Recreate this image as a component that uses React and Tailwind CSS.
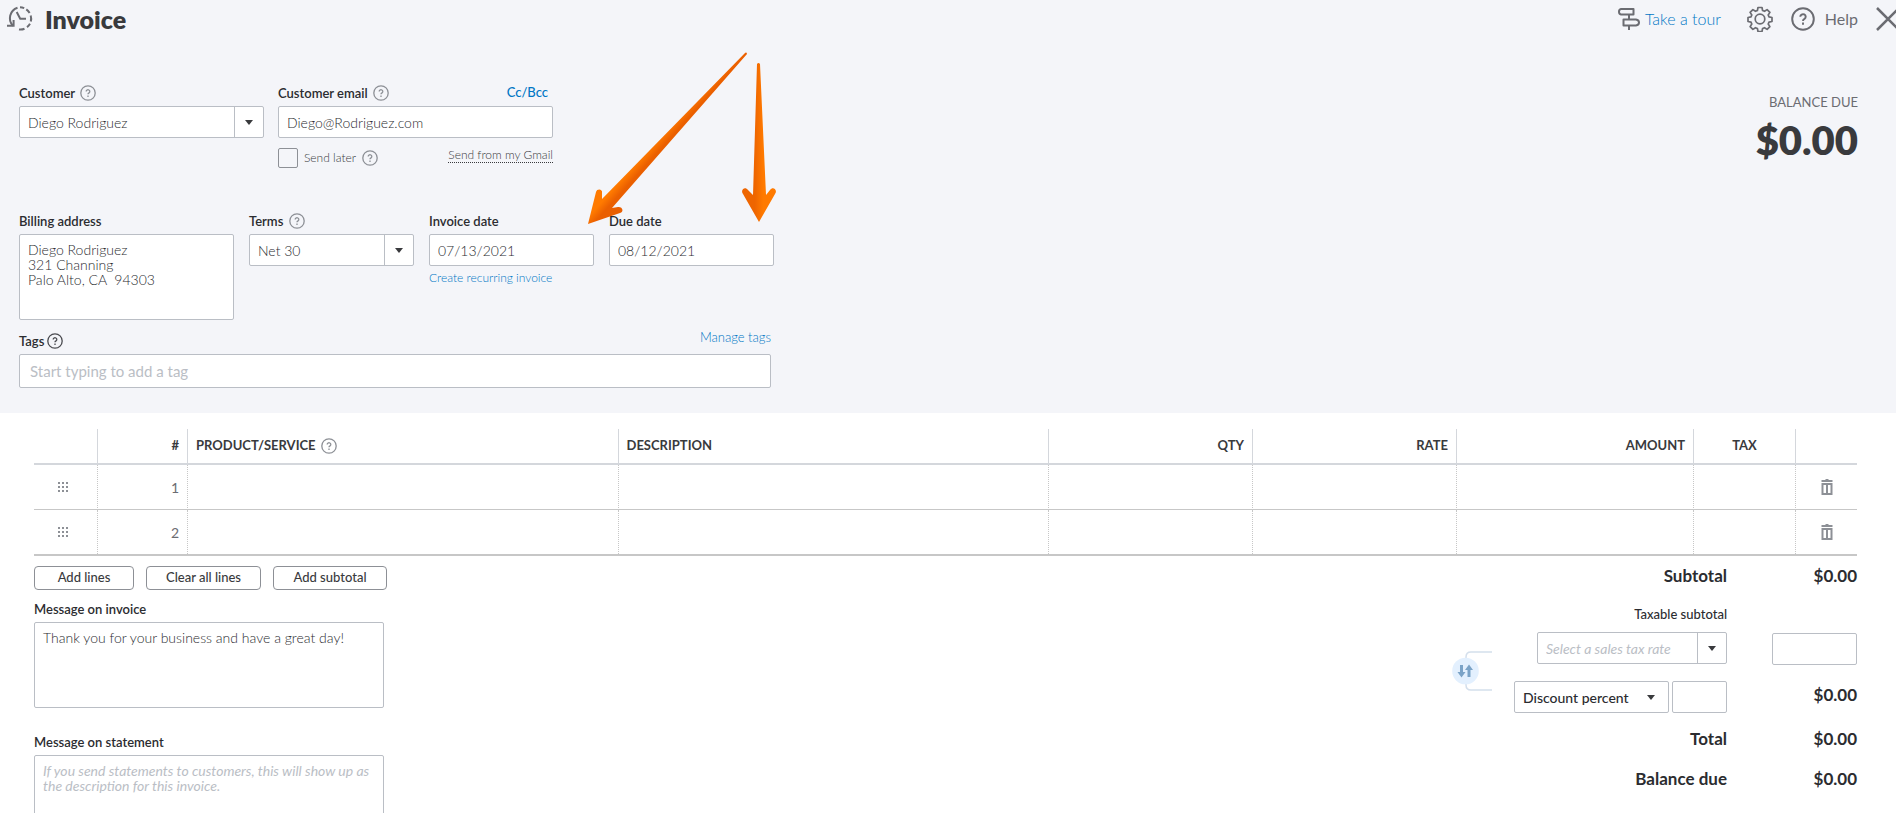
import { useState } from 'react'

const labelCls = 'text-[13px] leading-4 font-semibold text-[#2b2c30]'
const boxCls = 'rounded-xs border border-[#babec5] bg-white text-[14px] text-[#2b2c30] outline-none focus:border-[#2ca01c]'
const totalCls = 'text-[17px] leading-5 font-bold text-[#2b2c30]'

function HelpIcon({ size = 16, color = '#8d9096', width = 1.3 }) {
  return (
    <svg width={size} height={size} viewBox="0 0 16 16" fill="none" stroke={color} strokeWidth={width} aria-hidden="true">
      <circle cx="8" cy="8" r="7.2" />
      <path d="M6.200 6.500a1.800 1.700 0 1 1 2.800 1.400c-.7.4-1 .7-1 1.400" />
      <path d="M8 10.400v1.500" />
    </svg>
  )
}

function Caret() {
  return (
    <svg width="8" height="5" viewBox="0 0 8 5" fill="#393a3d" aria-hidden="true">
      <path d="M0 0h8L4 5z" />
    </svg>
  )
}

function Dropdown({ id, options, className, selectClass = 'font-light', divider = true, ...props }) {
  return (
    <div className={`grid h-8 ${className}`}>
      <select id={id} className={`col-start-1 row-start-1 w-full appearance-none pl-2 pr-8 ${boxCls} ${selectClass}`} {...props}>
        {options.map((item) => (
          <option key={item}>{item}</option>
        ))}
      </select>
      <span className={`pointer-events-none col-start-1 row-start-1 flex items-center justify-center justify-self-end pr-[2px] ${divider ? 'w-[30px] border-l border-[#babec5]' : 'w-[34px]'}`}>
        <Caret />
      </span>
    </div>
  )
}

function HistoryIcon() {
  return (
    <svg width="26" height="26" viewBox="0 0 26 26" fill="none" stroke="#6b6c72" strokeWidth="2" aria-hidden="true">
      <path d="M6 19.800A11 11 0 0 1 10.500 1.700" />
      <path d="M13 1.300a11 11 0 0 1 4.200.9M19.300 3.400a11 11 0 0 1 3.300 3.600M23.700 9.500a11 11 0 0 1 .1 6M23 17.800a11 11 0 0 1-3 3.300M17.500 22.700a11 11 0 0 1-5.500.7" />
      <path d="M0 19.700h6.600V14" />
      <path d="M9.700 6l3.500 6.700h5.800" />
    </svg>
  )
}

function SignpostIcon() {
  return (
    <svg width="24" height="24" viewBox="0 0 24 24" fill="none" stroke="#6b6c72" strokeWidth="2" strokeLinejoin="round" aria-hidden="true">
      <path d="M4 2h12.500v5.500H4Q2 7 2 4.700T4 2z" />
      <path d="M6.500 12.500H19q3 .5 3 3t-3 3H6.500z" />
      <path d="M12 7.500v5M12 18.500v4.500" />
    </svg>
  )
}

function GearIcon() {
  return (
    <svg width="26" height="26" viewBox="0 0 26 26" fill="none" stroke="#6b6c72" strokeWidth="1.700" strokeLinejoin="round" aria-hidden="true">
      <path d="M11 1.500h4l.6 3 1.900.8 2.600-1.700 2.800 2.800-1.700 2.600.8 1.900 3 .6v4l-3 .6-.8 1.900 1.700 2.600-2.800 2.800-2.600-1.700-1.900.8-.6 3h-4l-.6-3-1.900-.8-2.600 1.700-2.800-2.800 1.700-2.600-.8-1.900-3-.6v-4l3-.6.8-1.900-1.700-2.600 2.800-2.800 2.600 1.700 1.900-.8z" />
      <circle cx="13" cy="13" r="4.800" />
    </svg>
  )
}

function TrashIcon() {
  return (
    <svg width="12" height="16" viewBox="0 0 12 16" fill="none" stroke="#8d9096" strokeWidth="2" aria-hidden="true">
      <path d="M.5 2h11" />
      <path d="M4.500.5h3" strokeWidth="1" />
      <path d="M1.500 5h9v10h-9zM6 5v10" />
    </svg>
  )
}

function DragIcon() {
  return (
    <svg width="10" height="10" viewBox="0 0 10 10" fill="#8d9096" aria-hidden="true">
      {[0, 4, 8].map((y) => [0, 4, 8].map((x) => <rect key={`${x}-${y}`} x={x} y={y} width="2" height="2" />))}
    </svg>
  )
}

function Arrows() {
  return (
    <svg className="pointer-events-none absolute left-[580px] top-[45px]" width="200" height="185" viewBox="580 45 200 185" aria-hidden="true">
      <defs>
        <linearGradient id="slanted" gradientUnits="userSpaceOnUse" x1="601" y1="199" x2="611" y2="208">
          <stop offset="0.2" stopColor="#ff7a00" />
          <stop offset="0.8" stopColor="#ea5f00" />
        </linearGradient>
        <linearGradient id="upright" gradientUnits="userSpaceOnUse" x1="752" y1="0" x2="766" y2="0">
          <stop offset="0.2" stopColor="#ee6500" />
          <stop offset="0.8" stopColor="#ff7a00" />
        </linearGradient>
      </defs>
      <path fill="url(#slanted)" d="M744.500 53.500q2-2 2.500.5L612 208l6-1c5-.5 6 5 2 6l-32 11 8-32c1-4 7-3 6 1v6z" />
      <path fill="url(#upright)" d="M757 64q1.500-2 3 0l6 131 4-5c3-4 8 0 5 4l-16 28-16-28c-3-4 2-8 5-4l5 5z" />
    </svg>
  )
}

function SwapIcon() {
  return (
    <svg width="40" height="42" viewBox="0 0 40 42" fill="none" aria-hidden="true">
      <path d="M40 2H19q-5 0-5 5v28q0 5 5 5h21" stroke="#d4dfec" strokeWidth="1.500" />
      <circle cx="13.500" cy="21" r="13.300" fill="#e3f0fe" />
      <path d="M9.500 15v8M17 19v8" stroke="#7ba3c7" strokeWidth="3" />
      <path d="M5.500 22h8l-4 5.500zM13 20h8l-4-5.500z" fill="#7ba3c7" />
    </svg>
  )
}

function Header() {
  return (
    <header className="flex h-8 items-center justify-between pl-[7px] pt-[6px]">
      <div className="flex items-center gap-3">
        <HistoryIcon />
        <h1 className="text-[25px] leading-8 font-extrabold text-[#393a3d]">Invoice</h1>
      </div>
      <div className="flex items-center text-[16px] text-[#6b6c72]">
        <a href="#tour" className="flex items-center gap-1 font-light text-[#0077c5]">
          <SignpostIcon />
          Take a tour
        </a>
        <button aria-label="Settings" className="ml-[26px]"><GearIcon /></button>
        <button className="ml-[18px] flex items-center gap-[10px]">
          <HelpIcon size={24} color="#6b6c72" />
          Help
        </button>
        <button aria-label="Close" className="-mr-1 ml-[18px]">
          <svg width="24" height="24" viewBox="0 0 24 24" stroke="#6b6c72" strokeWidth="2.500" aria-hidden="true">
            <path d="M1 1l22 22M23 1L1 23" />
          </svg>
        </button>
      </div>
    </header>
  )
}

function CustomerRow() {
  return (
    <div className="flex items-start gap-[14px]">
      <div className="w-[245px]">
        <div className="mb-[5px] flex h-4 items-center gap-[5px]">
          <label htmlFor="customer" className={labelCls}>Customer</label>
          <HelpIcon />
        </div>
        <Dropdown id="customer" options={['Diego Rodriguez']} className="w-full" />
      </div>
      <div className="w-[275px]">
        <div className="mb-[5px] flex h-4 items-center gap-[5px]">
          <label htmlFor="email" className={labelCls}>Customer email</label>
          <HelpIcon />
          <a href="#cc" className="ml-auto mr-[5px] text-[13px] font-medium text-[#0077c5]">Cc/Bcc</a>
        </div>
        <input id="email" type="email" defaultValue="Diego@Rodriguez.com" className={`h-8 w-full px-2 font-light ${boxCls}`} />
        <div className="mt-[10px] flex items-start justify-between text-[12px] leading-[14px] text-[#393a3d]">
          <div className="flex items-center gap-[6px]">
            <input id="later" type="checkbox" className="size-5 appearance-none rounded-xs border border-[#8d9096] checked:bg-[#2ca01c]" />
            <label htmlFor="later" className="font-light">Send later</label>
            <HelpIcon />
          </div>
          <a href="#gmail" className="border-b border-dotted border-[#393a3d] font-light">Send from my Gmail</a>
        </div>
      </div>
    </div>
  )
}

function DetailsRow() {
  return (
    <div className="flex items-start gap-[15px]">
      <div className="flex w-[215px] flex-col gap-[5px]">
        <label htmlFor="address" className={labelCls}>Billing address</label>
        <textarea id="address" defaultValue={'Diego Rodriguez\n321 Channing\nPalo Alto, CA  94303'} className={`h-[86px] resize-none px-2 py-[7px] leading-[15px] font-light ${boxCls}`} />
      </div>
      <div className="w-[165px]">
        <div className="mb-[5px] flex h-4 items-center gap-[6px]">
          <label htmlFor="terms" className={labelCls}>Terms</label>
          <HelpIcon />
        </div>
        <Dropdown id="terms" options={['Net 30']} className="w-full" />
      </div>
      <div className="flex w-[165px] flex-col gap-[5px]">
        <label htmlFor="invoice-date" className={labelCls}>Invoice date</label>
        <input id="invoice-date" defaultValue="07/13/2021" className={`h-8 px-2 font-light ${boxCls}`} />
        <a href="#recurring" className="text-[12px] leading-[14px] font-light text-[#0077c5]">Create recurring invoice</a>
      </div>
      <div className="flex w-[165px] flex-col gap-[5px]">
        <label htmlFor="due-date" className={labelCls}>Due date</label>
        <input id="due-date" defaultValue="08/12/2021" className={`h-8 px-2 font-light ${boxCls}`} />
      </div>
    </div>
  )
}

function TagsRow() {
  return (
    <div className="w-[752px]">
      <div className="mb-[5px] flex items-start justify-between">
        <div className="flex items-center gap-[3px] pt-1">
          <label htmlFor="tags" className={labelCls}>Tags</label>
          <HelpIcon color="#4a4b50" />
        </div>
        <a href="#tags" className="text-[13px] leading-4 font-light text-[#0077c5]">Manage tags</a>
      </div>
      <input id="tags" placeholder="Start typing to add a tag" className="h-[34px] w-full rounded-xs border border-[#babec5] bg-white px-[10px] text-[15px] outline-none placeholder:text-[#babec5]" />
    </div>
  )
}

const columns = [
  { key: 'drag', title: '', width: 'w-[64px]' },
  { key: 'num', title: '#', width: 'w-[90px]', align: 'text-right' },
  { key: 'product', title: 'PRODUCT/SERVICE', align: 'text-left', help: true },
  { key: 'description', title: 'DESCRIPTION', align: 'text-left' },
  { key: 'qty', title: 'QTY', width: 'w-[204px]', align: 'text-right' },
  { key: 'rate', title: 'RATE', width: 'w-[204px]', align: 'text-right' },
  { key: 'amount', title: 'AMOUNT', width: 'w-[237px]', align: 'text-right' },
  { key: 'tax', title: 'TAX', width: 'w-[102px]', align: 'text-center' },
  { key: 'delete', title: '', width: 'w-[61px]' },
]

function LinesTable({ rows }) {
  return (
    <table className="w-full table-fixed border-separate border-spacing-0 border-b-2 border-[#c7c7c7] text-[13px] text-[#393a3d]">
      <thead>
        <tr>
          {columns.map((col) => (
            <th key={col.key} className={`h-9 border-b-2 border-r border-[#d4d7dc] px-2 font-bold last:border-r-0 ${col.width || ''} ${col.align || ''}`}>
              {col.help ? <span className="flex items-center gap-[5px]">{col.title}<HelpIcon /></span> : col.title}
            </th>
          ))}
        </tr>
      </thead>
      <tbody>
        {rows.map((row) => (
          <tr key={row} className="group">
            {columns.map((col) => (
              <td key={col.key} className="h-[45px] border-r border-b border-r-[#c7c7c7] border-b-[#c7c7c7] px-2 [border-right-style:dotted] last:border-r-0 group-last:h-11 group-last:border-b-0">
                {col.key === 'drag' ? <span className="flex justify-center pr-[5px]"><DragIcon /></span> : null}
                {col.key === 'num' ? <span className="block text-right text-[14px] text-[#6b6c72]">{row}</span> : null}
                {col.key === 'delete' ? <button aria-label={`Delete line ${row}`} className="mx-auto block"><TrashIcon /></button> : null}
              </td>
            ))}
          </tr>
        ))}
      </tbody>
    </table>
  )
}

function Messages({ onAdd, onClear }) {
  const btn = 'h-6 rounded border border-[#8d9096] bg-white text-[13px] font-medium text-[#393a3d] hover:bg-[#f4f5f8]'
  return (
    <div>
      <div className="flex gap-3">
        <button onClick={onAdd} className={`w-[100px] ${btn}`}>Add lines</button>
        <button onClick={onClear} className={`w-[115px] ${btn}`}>Clear all lines</button>
        <button className={`w-[114px] ${btn}`}>Add subtotal</button>
      </div>
      <div className="mt-[11px] flex w-[350px] flex-col gap-[5px]">
        <label htmlFor="message" className={labelCls}>Message on invoice</label>
        <textarea id="message" defaultValue="Thank you for your business and have a great day!" className={`h-[86px] resize-none px-2 py-[7px] leading-[15px] font-light ${boxCls}`} />
      </div>
      <div className="mt-[26px] flex w-[350px] flex-col gap-[5px]">
        <label htmlFor="statement" className={labelCls}>Message on statement</label>
        <textarea id="statement" placeholder="If you send statements to customers, this will show up as the description for this invoice." className={`h-[86px] resize-none px-2 py-[7px] leading-[15px] placeholder:text-[#babec5] placeholder:italic ${boxCls}`} />
      </div>
    </div>
  )
}

function Totals() {
  return (
    <div className="flex gap-[22px]">
      <div className="pt-[84px]"><SwapIcon /></div>
      <div className="flex gap-[45px]">
        <div className="flex flex-col items-end">
          <span className={totalCls}>Subtotal</span>
          <label htmlFor="tax-rate" className="mt-5 text-[13px] leading-4 font-medium text-[#2b2c30]">Taxable subtotal</label>
          <Dropdown id="tax-rate" options={['Select a sales tax rate']} className="mt-[10px] w-[190px]" selectClass="italic text-[#babec5]" />
          <div className="mt-[17px] flex gap-[3px]">
            <Dropdown options={['Discount percent', 'Discount value']} className="w-[155px]" selectClass="font-medium" divider={false} aria-label="Discount type" />
            <input aria-label="Discount" className={`h-8 w-[55px] px-2 ${boxCls}`} />
          </div>
          <span className={`mt-4 ${totalCls}`}>Total</span>
          <span className={`mt-5 ${totalCls}`}>Balance due</span>
        </div>
        <div className="flex w-[85px] flex-col items-end">
          <span className={totalCls}>$0.00</span>
          <input aria-label="Sales tax" className={`mt-[47px] h-8 w-full px-2 ${boxCls}`} />
          <span className={`mt-5 ${totalCls}`}>$0.00</span>
          <span className={`mt-6 ${totalCls}`}>$0.00</span>
          <span className={`mt-5 ${totalCls}`}>$0.00</span>
        </div>
      </div>
    </div>
  )
}

export default function App() {
  const [count, setCount] = useState(2)
  const rows = Array.from({ length: count }, (_, i) => i + 1)

  return (
    <div className="relative h-screen overflow-hidden bg-white font-['Lato','Liberation_Sans',sans-serif] text-[#393a3d]">
      <section className="bg-[#f4f5f9] pb-[25px]">
        <Header />
        <Arrows />
        <div className="relative flex items-start justify-between pl-[19px] pr-[38px] pt-[53px]">
          <div className="flex flex-col">
            <CustomerRow />
            <div className="mt-[45px]"><DetailsRow /></div>
            <div className="mt-[9px]"><TagsRow /></div>
          </div>
          <div className="flex flex-col items-end pt-[9px]">
            <span className="text-[13px] leading-4 text-[#6b6c72]">BALANCE DUE</span>
            <span className="mt-[10px] text-[40px] leading-10 font-extrabold text-[#393a3d]">$0.00</span>
          </div>
        </div>
      </section>
      <main className="pl-[34px] pr-[39px] pt-4">
        <LinesTable rows={rows} />
        <div className="flex items-start justify-between pt-[10px]">
          <Messages onAdd={() => setCount(count + 4)} onClear={() => setCount(2)} />
          <Totals />
        </div>
      </main>
    </div>
  )
}
